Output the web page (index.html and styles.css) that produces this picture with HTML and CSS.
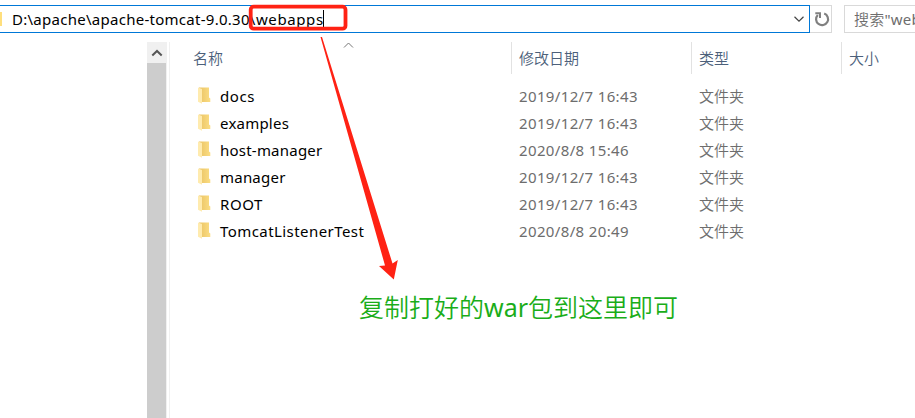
FILE: index.html
```html
<!DOCTYPE html>
<html lang="zh-CN">
<head>
<meta charset="utf-8">
<title>webapps</title>
<link rel="stylesheet" href="styles.css">
</head>
<body>
<svg class="defs" width="0" height="0"><defs>
  <linearGradient id="back"><stop offset="0" stop-color="#eac363"/><stop offset="1" stop-color="#fbdd83"/></linearGradient>
  <symbol id="folder" viewBox="0 0 13 17"><path d="M1 .5H11V10.500L12.300 11.500V15H1Z" fill="url(#back)"/><path d="M0 .5 4 2V16.800L0 14.800Z" fill="#ffebae"/></symbol>
</defs></svg>
<div class="window">
  <header class="toolbar">
    <div class="address">
      <span class="crumb-icon"></span>
      <span class="path">D:\apache\apache-tomcat-9.0.30<span class="tail">\webapps</span></span><span class="caret"></span>
      <svg class="drop" width="12" height="8" viewBox="0 0 12 8"><path d="M1.500 1.800 6 6.200l4.500-4.400" fill="none" stroke="#444" stroke-width="1.200"/></svg>
    </div>
    <div class="refresh"><svg width="18" height="18" viewBox="0 0 18 18"><path d="M4.800 4.900A6 6 0 1 0 11.200 3.500" fill="none" stroke="#808080" stroke-width="2.200"/><path d="M2.300 3.300H7V8" fill="none" stroke="#808080" stroke-width="2"/></svg></div>
    <div class="search">搜索<span class="latin">"webapps"</span></div>
  </header>
  <main class="body">
    <aside class="tree"><div class="scrollbar"><div class="up"><svg width="12" height="8" viewBox="0 0 12 8"><path d="M1.300 6.500 6 2l4.700 4.500" fill="none" stroke="#555" stroke-width="2"/></svg></div><div class="thumb"></div></div></aside>
    <section class="files">
      <div class="row head"><span class="name">名称</span><span class="date">修改日期</span><span class="type">类型</span><span class="size">大小</span></div>
      <div class="list">
        <div class="row"><span class="name"><svg class="folder"><use href="#folder"/></svg><b class="wide">docs</b></span><span class="date">2019/12/7 16:43</span><span class="type">文件夹</span></div>
        <div class="row"><span class="name"><svg class="folder"><use href="#folder"/></svg><b>examples</b></span><span class="date">2019/12/7 16:43</span><span class="type">文件夹</span></div>
        <div class="row"><span class="name"><svg class="folder"><use href="#folder"/></svg><b>host-manager</b></span><span class="date">2020/8/8 15:46</span><span class="type">文件夹</span></div>
        <div class="row"><span class="name"><svg class="folder"><use href="#folder"/></svg><b>manager</b></span><span class="date">2019/12/7 16:43</span><span class="type">文件夹</span></div>
        <div class="row"><span class="name"><svg class="folder"><use href="#folder"/></svg><b class="wide">ROOT</b></span><span class="date">2019/12/7 16:43</span><span class="type">文件夹</span></div>
        <div class="row"><span class="name"><svg class="folder"><use href="#folder"/></svg><b class="long">TomcatListenerTest</b></span><span class="date">2020/8/8 20:49</span><span class="type">文件夹</span></div>
      </div>
    </section>
  </main>
  <svg class="marks" width="915" height="418" viewBox="0 0 915 418">
    <path d="M344 47.500 348.500 43l4.500 4.500" fill="none" stroke="#777" stroke-width="1"/>
    <rect x="250.700" y="6.700" width="94.800" height="22" rx="3" fill="none" stroke="#ff2214" stroke-width="3.800"/>
    <path d="M320.500 37 322 37 392.500 263.500 397.800 260 393.800 279.500 379 266 385 265.500Z" fill="#ff2214"/>
  </svg>
  <div class="note">复制打好的<span class="latin">war</span>包到这里即可</div>
</div>
</body>
</html>
```
FILE: styles.css
```css
* { box-sizing: border-box; }
body { margin: 0; background: #fff; font-family: "Noto Sans", "Noto Sans CJK SC", sans-serif; font-size: 15px; overflow: hidden; }
.defs { position: absolute; }
.window { position: relative; width: 915px; height: 418px; overflow: hidden; display: flex; flex-direction: column; }
.toolbar { display: flex; height: 33px; padding-top: 5px; flex: none; }
.address { width: 810px; height: 28px; border: 1px solid #0078d7; border-left: 0; display: flex; align-items: center; flex: none; }
.crumb-icon { width: 2px; height: 14px; background: #ffdf7d; margin-right: 10px; }
.path { color: #000; line-height: 26px; white-space: pre; letter-spacing: .27px; }
.tail { letter-spacing: .6px; }
.caret { width: 1px; height: 19px; background: #000; margin-left: -1px; }
.drop { margin-left: auto; margin-right: 4px; }
.refresh { width: 22px; height: 28px; border: 1px solid #d9d9d9; border-left: 0; padding-left: 2px; display: flex; align-items: center; justify-content: center; flex: none; }
.search { margin-left: 12px; width: 120px; height: 28px; border: 1px solid #d9d9d9; padding-left: 9px; line-height: 26px; color: #6d6d6d; white-space: nowrap; flex: none; letter-spacing: .2px; }
.body { display: flex; flex: 1; padding-top: 9px; }
.tree { width: 170px; border-right: 1px solid #f0f0f0; display: flex; justify-content: flex-end; padding-right: 2px; flex: none; }
.scrollbar { width: 20px; background: #f0f0f0; display: flex; flex-direction: column; padding-right: 1px; }
.up { height: 21px; display: flex; align-items: center; justify-content: center; flex: none; }
.thumb { flex: 1; background: #cdcdcd; }
.files { flex: 1; }
.row { display: grid; grid-template-columns: 341px 180px 150px 74px; height: 27px; line-height: 27px; color: #6d6d6d; }
.head { height: 32px; line-height: 32px; color: #4c607a; }
.head .name { padding-left: 23px; }
.head .date, .head .type, .head .size { border-left: 1px solid #e2e2e2; padding-left: 7px; }
.list { padding-top: 9px; }
.list .name { display: flex; align-items: center; padding-left: 28px; color: #000; }
.list .date, .list .type { padding-left: 8px; }
.list .date { letter-spacing: .36px; }
.name b { font-weight: 400; letter-spacing: .22px; }
.name b.wide { letter-spacing: .6px; }
.name b.long { letter-spacing: .43px; }
.folder { width: 13px; height: 17px; margin-right: 9px; margin-top: -3px; flex: none; }
.marks { position: absolute; left: 0; top: 0; }
.note { position: absolute; left: 359px; top: 289px; font-size: 25px; line-height: 36px; color: #1aad19; white-space: nowrap; }
.head, .type, .search, .note { font-weight: 350; }
.latin { font-weight: 400; }
```
